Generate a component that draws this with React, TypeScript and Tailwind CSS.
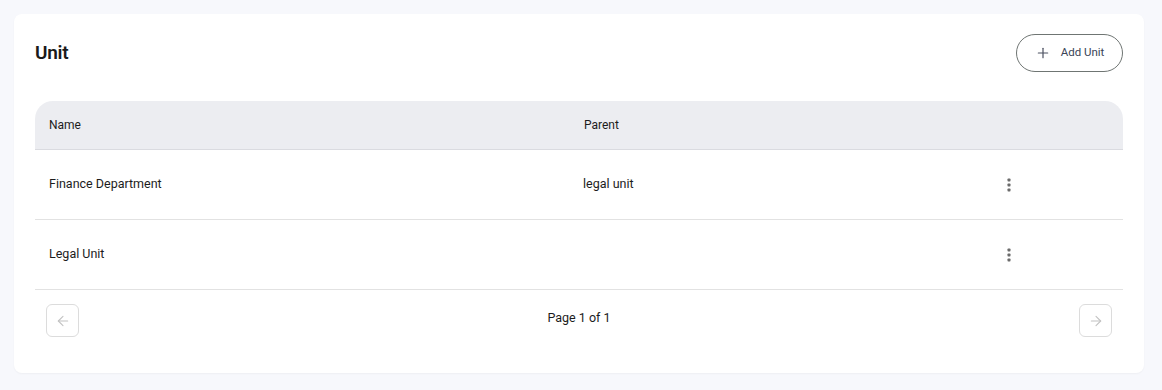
import React from 'react';
import { ArrowLeft, ArrowRight, Plus } from 'lucide-react';

interface UnitRow {
  name: string;
  parent: string;
}

const units: UnitRow[] = [
  { name: 'Finance Department', parent: 'legal unit' },
  { name: 'Legal Unit', parent: '' },
];

const DotsIcon = () => (
  <svg width="4" height="14" viewBox="0 0 4 14" fill="#6b6b6b">
    <rect x="0.5" y="0.5" width="3" height="3" rx="0.8" />
    <rect x="0.5" y="5.5" width="3" height="3" rx="0.8" />
    <rect x="0.5" y="10.5" width="3" height="3" rx="0.8" />
  </svg>
);

export default function App() {
  return (
    <div
      className="min-h-[390px] w-full bg-[#f7f8fc] pt-[14px] pb-[14px] pl-[14px] pr-[18px]"
      style={{ fontFamily: 'Roboto, "Liberation Sans", sans-serif' }}
    >
      <div className="rounded-lg bg-white px-[21px] pt-5 pb-9 shadow-[0_1px_2px_rgba(0,0,0,0.04)]">
        <div className="flex items-center justify-between">
          <h1 className="text-[19px] font-semibold leading-7 tracking-[-0.3px] text-[#1a1a1a]">Unit</h1>
          <button className="flex h-[38px] w-[107px] items-center justify-center gap-[10px] rounded-full border border-[#6f7573] text-[11.5px] text-[#3a4456]">
            <Plus size={16} strokeWidth={1.8} className="text-[#4b5060]" />
            <span className="leading-none">Add Unit</span>
          </button>
        </div>

        <div className="mt-[29px]">
          <div className="grid h-[49px] grid-cols-[535px_1fr_126px] items-center rounded-t-[18px] border-b border-[#dadbe0] bg-[#ecedf1] text-[12px] text-[#1c1c1c]">
            <div className="pl-[14px]">Name</div>
            <div className="pl-[14px]">Parent</div>
            <div />
          </div>
          {units.map((unit) => (
            <div
              key={unit.name}
              className="grid h-[70px] grid-cols-[535px_1fr_126px] items-center border-b border-[#e2e2e2] text-[12.5px] text-[#1c1c1c]"
            >
              <div className="pl-[14px]">{unit.name}</div>
              <div className="pl-[13px]">{unit.parent}</div>
              <div>
                <button className="flex h-6 w-6 items-center justify-center" aria-label="Actions">
                  <DotsIcon />
                </button>
              </div>
            </div>
          ))}

          <div className="flex items-center justify-between px-[11px] pt-[14px]">
            <button className="flex h-[33px] w-[33px] items-center justify-center rounded-md border border-[#dcdcdc] text-[#c2c2c2]">
              <ArrowLeft size={16} strokeWidth={1.6} />
            </button>
            <span className="mb-[5px] text-[12.5px] text-[#1c1c1c]">Page 1 of 1</span>
            <button className="flex h-[33px] w-[33px] items-center justify-center rounded-md border border-[#dcdcdc] text-[#c2c2c2]">
              <ArrowRight size={16} strokeWidth={1.6} />
            </button>
          </div>
        </div>
      </div>
    </div>
  );
}
